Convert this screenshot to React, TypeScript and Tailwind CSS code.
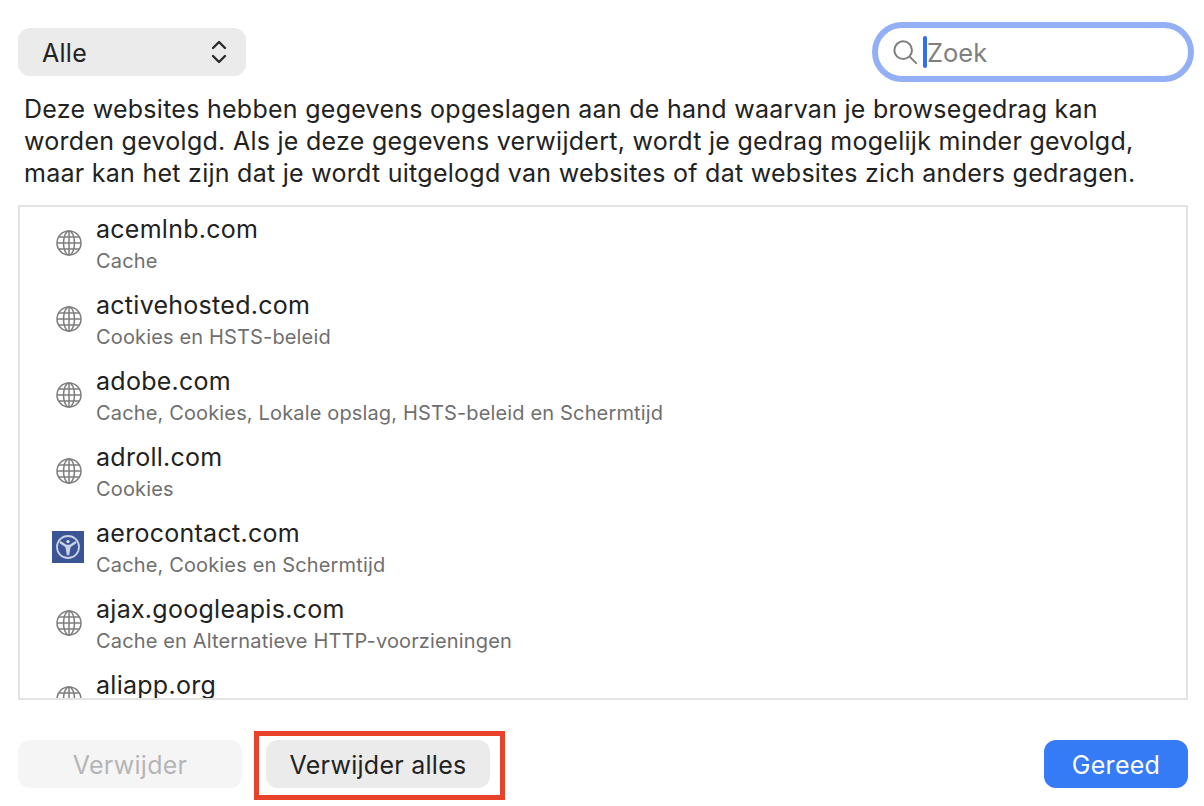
import React from 'react';

const sites = [
  { name: 'acemlnb.com', detail: 'Cache' },
  { name: 'activehosted.com', detail: 'Cookies en HSTS-beleid' },
  { name: 'adobe.com', detail: 'Cache, Cookies, Lokale opslag, HSTS-beleid en Schermtijd' },
  { name: 'adroll.com', detail: 'Cookies' },
  { name: 'aerocontact.com', detail: 'Cache, Cookies en Schermtijd', custom: true },
  { name: 'ajax.googleapis.com', detail: 'Cache en Alternatieve HTTP-voorzieningen' },
  { name: 'aliapp.org', detail: '' },
];

function GlobeIcon() {
  return (
    <svg className="ml-[2px]" width="28" height="28" viewBox="0 0 28 28" fill="none" stroke="#7d7d7d" strokeWidth="1.5">
      <circle cx="14" cy="14" r="12" />
      <ellipse cx="14" cy="14" rx="5.5" ry="12" />
      <path d="M14 2v24M2 14h24M4 8h20M4 20h20" />
    </svg>
  );
}

function AeroIcon() {
  return (
    <div className="w-8 h-8 bg-[#3b5495] flex items-center justify-center">
      <svg width="28" height="28" viewBox="0 0 28 28" fill="none" stroke="#c9d2e6">
        <circle cx="14" cy="14" r="11" strokeWidth="1.8" />
        <path d="M6 9l6 4h4l6-4" strokeWidth="2.4" />
        <path d="M12.5 13l1.5 9 1.5-9" strokeWidth="2.4" />
        <circle cx="14" cy="8.5" r="1.6" fill="#e2e7f2" stroke="none" />
      </svg>
    </div>
  );
}

export default function App() {
  return (
    <div className="w-[1204px] h-[806px] bg-white overflow-hidden pl-[18px] pr-4 font-['Inter','Liberation_Sans',sans-serif] text-[#222222] text-[25px] tracking-[0.27px]">
      <div className="h-[93px] pt-[11px] flex items-center justify-between">
        <div className="w-[228px] h-12 pt-[3px] rounded-xl bg-[#ebebeb] flex items-center justify-between pl-6 pr-[19px]">
          <span>Alle</span>
          <svg className="-mt-[3px]" width="16" height="28" viewBox="0 0 16 28" fill="none" stroke="#2a2a2a" strokeWidth="2.4" strokeLinecap="round" strokeLinejoin="round">
            <path d="M2 10l6-6 6 6M2 18l6 6 6-6" />
          </svg>
        </div>
        <div className="w-[322px] h-[60px] -mr-[6px] rounded-[30px] border-[6px] border-[#94b0f4] bg-white flex items-center pl-[14px]">
          <svg width="26" height="26" viewBox="0 0 28 28" fill="none" stroke="#7f7f7f" strokeWidth="2.2" strokeLinecap="round">
            <circle cx="12" cy="12" r="9.5" />
            <path d="M19 19l7 7" />
          </svg>
          <div className="w-1 h-8 rounded-sm bg-[#2f6fed] ml-[5px]" />
          <span className="text-[#7f7f7f] text-[25.5px] tracking-normal pt-[2px]">Zoek</span>
        </div>
      </div>
      <p className="ml-[6px] leading-8 whitespace-nowrap">
        Deze websites hebben gegevens opgeslagen aan de hand waarvan je browsegedrag kan
        <br />
        worden gevolgd. Als je deze gegevens verwijdert, wordt je gedrag mogelijk minder gevolgd,
        <br />
        maar kan het zijn dat je wordt uitgelogd van websites of dat websites zich anders gedragen.
      </p>
      <div className="mt-4 h-[495px] border-2 border-[#e3e3e3] overflow-hidden">
        <div className="-mt-[2px]">
          {sites.map(site => (
            <div key={site.name} className="h-[76px] flex items-center pl-8">
              <div className="w-8 flex items-center justify-center">
                {site.custom ? <AeroIcon /> : <GlobeIcon />}
              </div>
              <div className="ml-3">
                <div className="leading-8">{site.name}</div>
                <div className="h-6 text-[20px] tracking-[0.15px] leading-6 mt-1 text-[#6f6f6f]">{site.detail}</div>
              </div>
            </div>
          ))}
        </div>
      </div>
      <div className="flex items-start mt-[31px]">
        <button className="w-[224px] h-12 pt-[3px] mt-[9px] rounded-xl bg-[#f5f5f5] text-[#b5b5b5]">Verwijder</button>
        <div className="ml-3 border-[5px] border-[#e8432a] pl-[7px] pr-[10px] pt-1 pb-[7px]">
          <button className="w-[224px] h-12 pt-[3px] rounded-xl bg-[#ebebeb] block">Verwijder alles</button>
        </div>
        <button className="ml-auto w-[144px] h-12 pt-[3px] mt-[9px] rounded-xl bg-[#367bf6] text-white">Gereed</button>
      </div>
    </div>
  );
}
